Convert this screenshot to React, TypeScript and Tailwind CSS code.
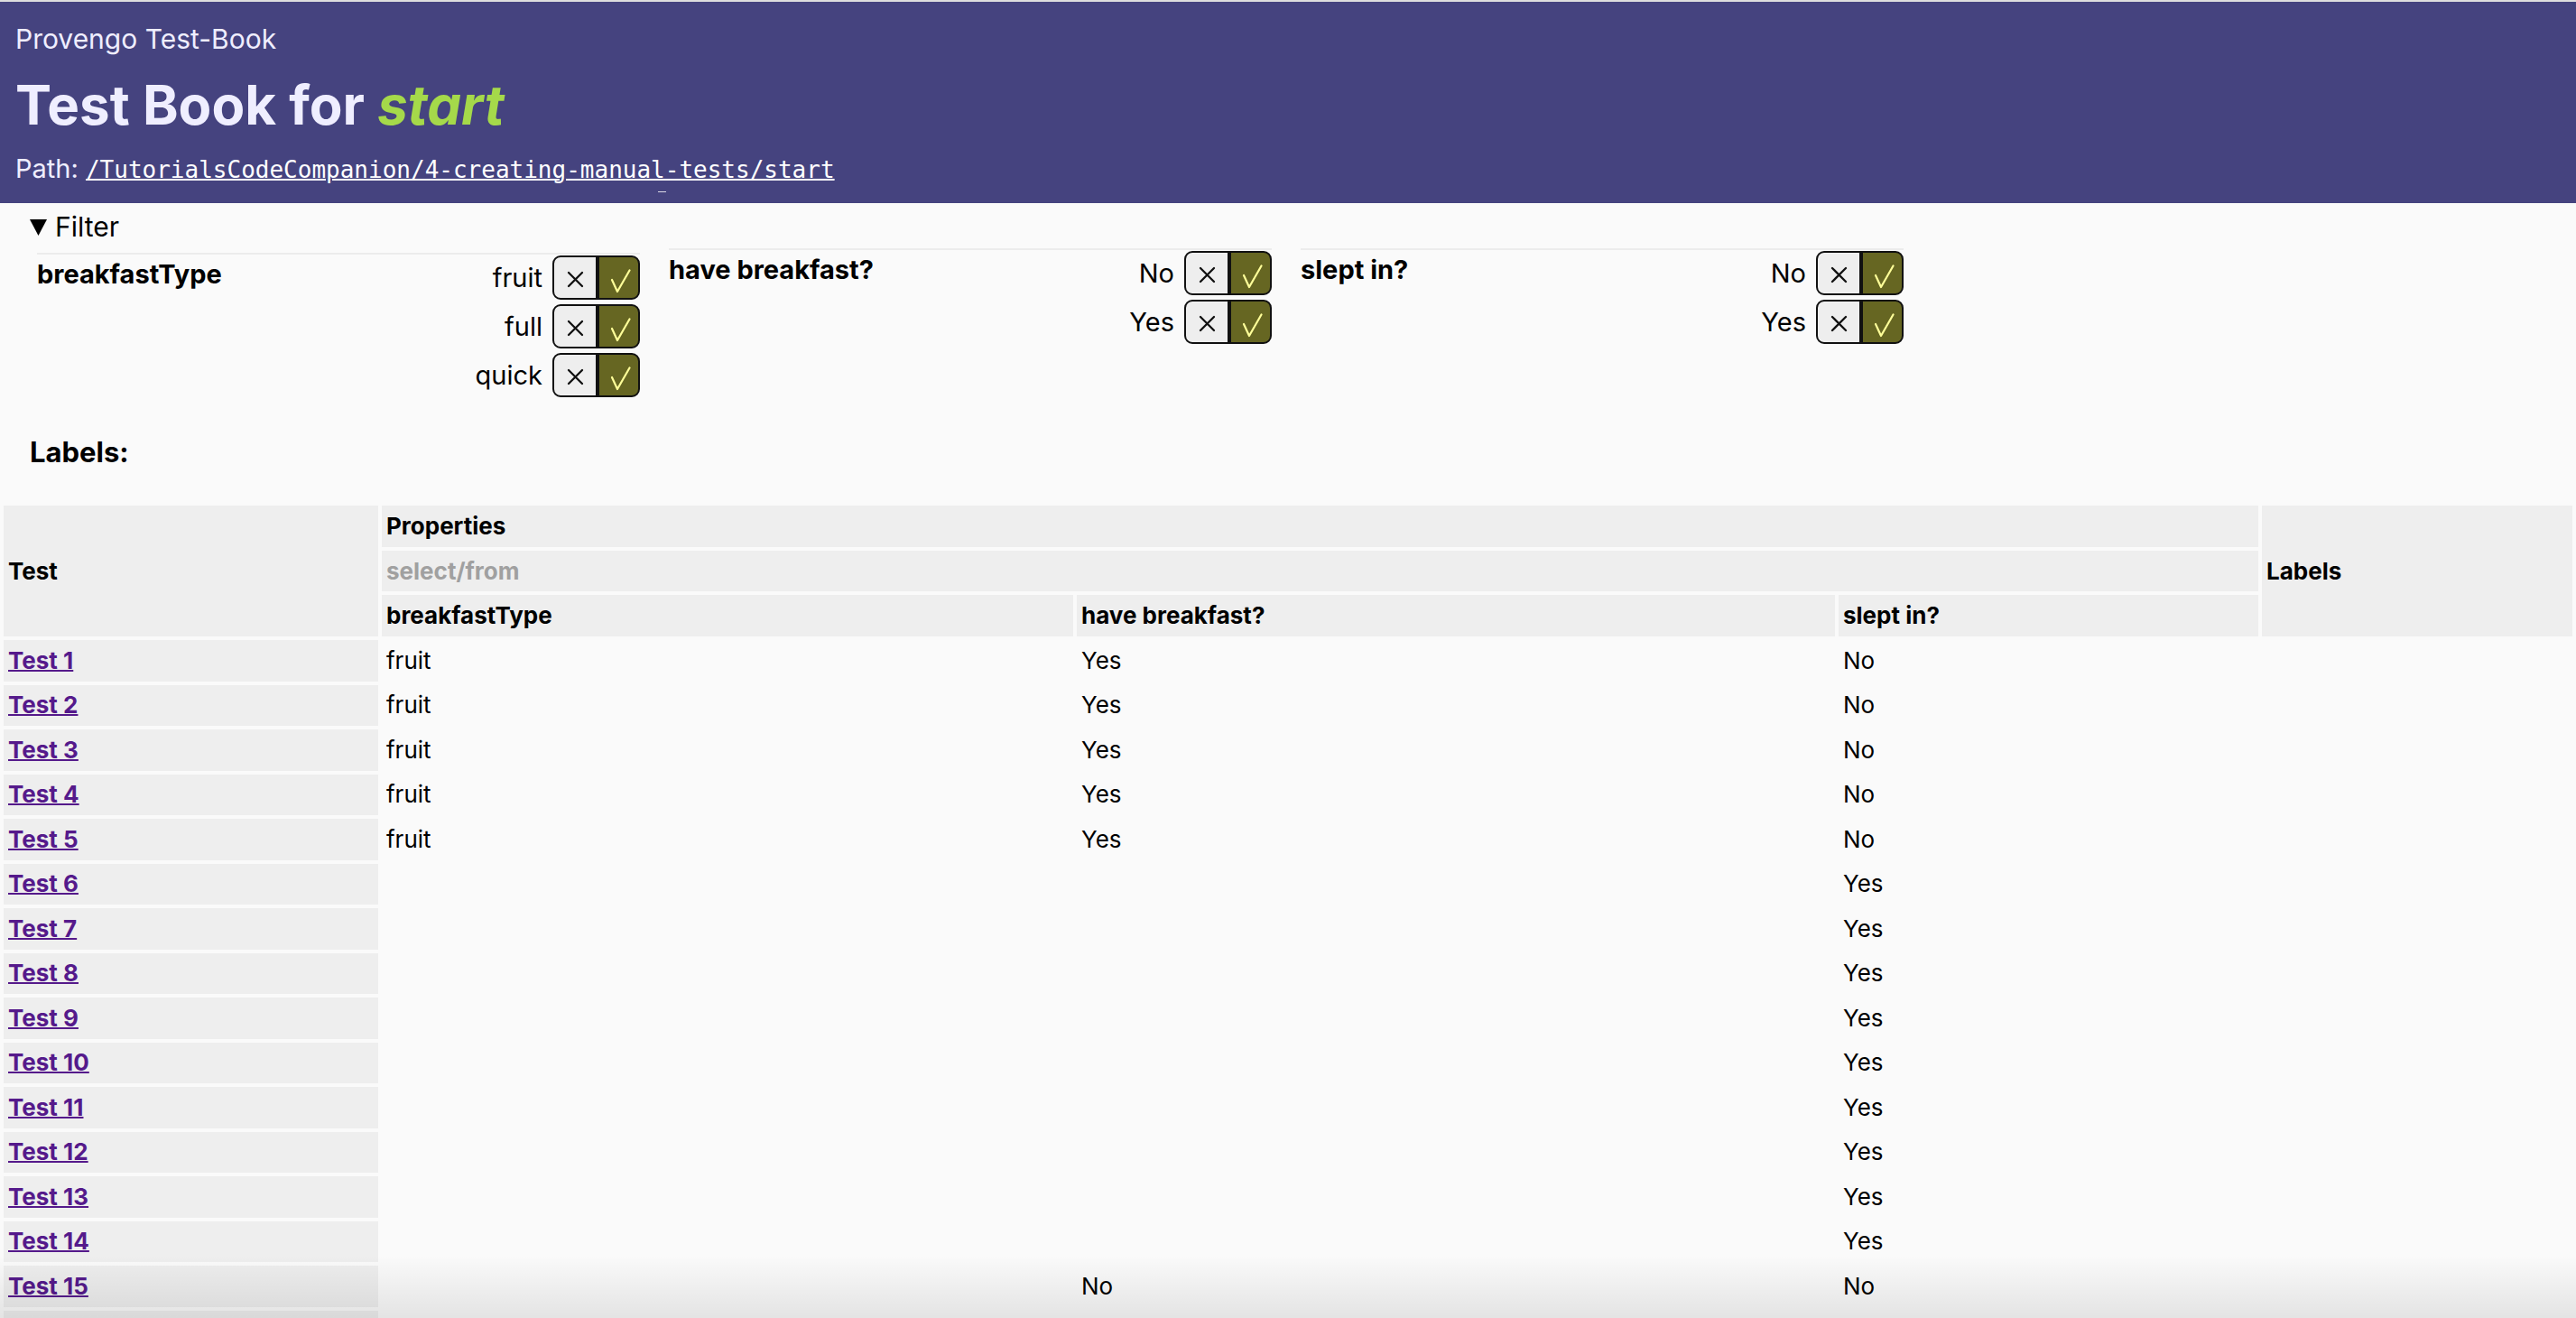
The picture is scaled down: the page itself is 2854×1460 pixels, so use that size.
import React from "react";

type Row = { name: string; type: string; breakfast: string; slept: string };

const rows: Row[] = [
  { name: "Test 1", type: "fruit", breakfast: "Yes", slept: "No" },
  { name: "Test 2", type: "fruit", breakfast: "Yes", slept: "No" },
  { name: "Test 3", type: "fruit", breakfast: "Yes", slept: "No" },
  { name: "Test 4", type: "fruit", breakfast: "Yes", slept: "No" },
  { name: "Test 5", type: "fruit", breakfast: "Yes", slept: "No" },
  { name: "Test 6", type: "", breakfast: "", slept: "Yes" },
  { name: "Test 7", type: "", breakfast: "", slept: "Yes" },
  { name: "Test 8", type: "", breakfast: "", slept: "Yes" },
  { name: "Test 9", type: "", breakfast: "", slept: "Yes" },
  { name: "Test 10", type: "", breakfast: "", slept: "Yes" },
  { name: "Test 11", type: "", breakfast: "", slept: "Yes" },
  { name: "Test 12", type: "", breakfast: "", slept: "Yes" },
  { name: "Test 13", type: "", breakfast: "", slept: "Yes" },
  { name: "Test 14", type: "", breakfast: "", slept: "Yes" },
  { name: "Test 15", type: "", breakfast: "No", slept: "No" },
];

function CrossIcon() {
  return (
    <svg width="19" height="19" viewBox="0 0 19 19" className="mt-[3px]">
      <path d="M2 2L17 17M17 2L2 17" stroke="#111" strokeWidth="2.3" strokeLinecap="round" />
    </svg>
  );
}

function CheckIcon() {
  return (
    <svg width="23" height="27" viewBox="0 0 23 27" className="ml-[4px] mt-[8px]">
      <path
        d="M2 12L8 25L21.5 1.5"
        stroke="#ffff99"
        strokeWidth="2.2"
        fill="none"
        strokeLinecap="round"
        strokeLinejoin="round"
      />
    </svg>
  );
}

function Toggle() {
  return (
    <div className="flex h-[49px]">
      <div className="flex w-[50px] items-center justify-center rounded-l-[9px] border-2 border-[#111] bg-[#eeeeee]">
        <CrossIcon />
      </div>
      <div className="flex w-[47px] items-center justify-center rounded-r-[9px] border-2 border-[#111] bg-[#666622]">
        <CheckIcon />
      </div>
    </div>
  );
}

function FilterGroup({ title, options, className }: { title: string; options: string[]; className: string }) {
  return (
    <div className={"mx-[16px] w-[668px] border-t-2 border-[#ececec] " + className}>
      <div className="flex justify-between">
        <div className="pt-[4px] text-[29px] font-bold leading-[36px]">{title}</div>
        <div className="flex flex-col items-end gap-[5px] pt-[1px]">
          {options.map((o) => (
            <div key={o} className="flex items-center gap-[11px]">
              <span className="text-[29px] leading-[36px]">{o}</span>
              <Toggle />
            </div>
          ))}
        </div>
      </div>
    </div>
  );
}

export default function App() {
  return (
    <div className="relative h-[1460px] w-[2854px] overflow-hidden border-t-2 border-[#dedede] bg-[#fafafa] font-['Inter',sans-serif] text-black">
      <header className="relative h-[223px] bg-[#45437f] px-[17px] pt-[23px] text-[#efeeff]">
        <div className="text-[30px] leading-[36px]">Provengo Test-Book</div>
        <h1 className="mt-[16px] text-[60px] font-bold leading-[78px]">
          Test Book for <em className="text-[#a5d94a]">start</em>
        </h1>
        <div className="mt-[15px] text-[29px] leading-[34px]">
          Path:{" "}
          <a className="font-['DejaVu_Sans_Mono',monospace] text-[26px] text-white underline decoration-2">
            /TutorialsCodeCompanion/4-creating-manual-tests/start
          </a>
        </div>
        <div className="absolute left-[729px] top-[210px] h-[1px] w-[9px] bg-white/80" />
      </header>

      <div className="mt-[8px] flex items-center gap-[9px] pl-[33px]">
        <svg width="19" height="18" viewBox="0 0 19 18" className="mt-[2px]">
          <path d="M0 0H19L9.5 18Z" fill="#000" />
        </svg>
        <span className="text-[30px] leading-[36px]">Filter</span>
      </div>

      <div className="mt-[6px] flex items-start pl-[25px]">
        <FilterGroup title="breakfastType" options={["fruit", "full", "quick"]} className="mt-[5px]" />
        <FilterGroup title="have breakfast?" options={["No", "Yes"]} className="mt-0" />
        <FilterGroup title="slept in?" options={["No", "Yes"]} className="mt-0" />
      </div>

      <div className="mt-[43px] pl-[33px] text-[31px] font-bold leading-[36px]">Labels:</div>

      <table className="mt-[37px] w-full table-fixed border-separate border-spacing-[4px] text-left text-[26px] leading-[32px]">
        <colgroup>
          <col className="w-[415px]" />
          <col className="w-[766px]" />
          <col className="w-[840px]" />
          <col className="w-[465px]" />
          <col className="w-[344px]" />
        </colgroup>
        <thead>
          <tr>
            <th rowSpan={3} className="bg-[#eeeeee] px-[5px] font-bold">
              Test
            </th>
            <th colSpan={3} className="h-[46px] bg-[#eeeeee] px-[5px] font-bold">
              Properties
            </th>
            <th rowSpan={3} className="bg-[#eeeeee] px-[5px] font-bold">
              Labels
            </th>
          </tr>
          <tr>
            <th colSpan={3} className="h-[45px] bg-[#eeeeee] px-[5px] font-bold text-[#a0a0a0]">
              select/from
            </th>
          </tr>
          <tr>
            <th className="h-[46px] bg-[#eeeeee] px-[5px] font-bold">breakfastType</th>
            <th className="h-[46px] bg-[#eeeeee] px-[5px] font-bold">have breakfast?</th>
            <th className="h-[46px] bg-[#eeeeee] px-[5px] font-bold">slept in?</th>
          </tr>
        </thead>
        <tbody>
          {rows.map((r) => (
            <tr key={r.name}>
              <td className="h-[45.5px] bg-[#eeeeee] px-[5px]">
                <a className="font-bold text-[#551a8b] underline decoration-2">{r.name}</a>
              </td>
              <td className="px-[5px]">{r.type}</td>
              <td className="px-[5px]">{r.breakfast}</td>
              <td className="px-[5px]">{r.slept}</td>
              <td className="px-[5px]"></td>
            </tr>
          ))}
          <tr>
            <td className="h-[45.5px] bg-[#eeeeee] px-[5px]"></td>
            <td className="px-[5px]"></td>
            <td className="px-[5px]"></td>
            <td className="px-[5px]"></td>
            <td className="px-[5px]"></td>
          </tr>
        </tbody>
      </table>

      <div className="pointer-events-none absolute inset-x-0 bottom-0 h-[70px] bg-linear-to-b from-transparent to-black/[0.09]" />
    </div>
  );
}
